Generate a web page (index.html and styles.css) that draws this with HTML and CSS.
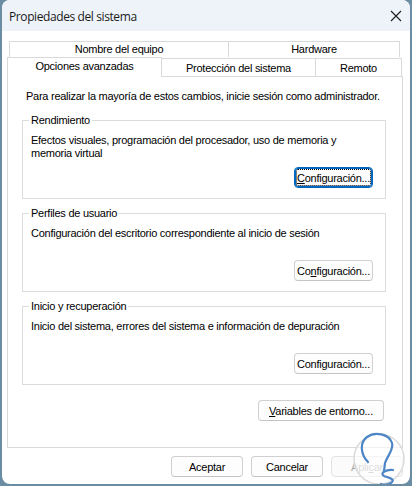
FILE: index.html
```html
<!DOCTYPE html>
<html lang="es">
<head>
<meta charset="utf-8">
<title>Propiedades del sistema</title>
<link rel="stylesheet" href="styles.css">
</head>
<body>
<div class="window">
  <div class="titlebar">
    <span class="title">Propiedades del sistema</span>
    <svg class="close" width="12" height="12" viewBox="0 0 12 12" aria-hidden="true"><path d="M1 1L11 11M11 1L1 11" stroke="#1b1b1b" stroke-width="1.1" fill="none"/></svg>
  </div>
  <div class="content">
    <div class="tabrow back">
      <div class="tab t-nombre">Nombre del equipo</div>
      <div class="tab t-hw">Hardware</div>
    </div>
    <div class="tabrow front">
      <div class="tab t-opc selected">Opciones avanzadas</div>
      <div class="tab t-prot">Protección del sistema</div>
      <div class="tab t-rem">Remoto</div>
    </div>
    <div class="panel">
      <p class="intro">Para realizar la mayoría de estos cambios, inicie sesión como administrador.</p>
      <fieldset class="group">
        <legend>Rendimiento</legend>
        <p class="desc">Efectos visuales, programación del procesador, uso de memoria y memoria virtual</p>
        <div class="actions"><button class="btn cfg focused" type="button"><u>C</u>onfiguración...</button></div>
      </fieldset>
      <fieldset class="group">
        <legend>Perfiles de usuario</legend>
        <p class="desc">Configuración del escritorio correspondiente al inicio de sesión</p>
        <div class="actions"><button class="btn cfg" type="button">Co<u>n</u>figuración...</button></div>
      </fieldset>
      <fieldset class="group">
        <legend>Inicio y recuperación</legend>
        <p class="desc">Inicio del sistema, errores del sistema e información de depuración</p>
        <div class="actions"><button class="btn cfg" type="button">Confi<u>g</u>uración...</button></div>
      </fieldset>
      <div class="actions env"><button class="btn wide" type="button"><u>V</u>ariables de entorno...</button></div>
    </div>
    <div class="footer">
      <button class="btn foot" type="button">Aceptar</button>
      <button class="btn foot" type="button">Cancelar</button>
      <button class="btn foot" type="button" disabled>Apli<u>c</u>ar</button>
    </div>
  </div>
  <svg class="watermark" width="56" height="56" viewBox="0 0 56 56" aria-hidden="true">
    <circle cx="28" cy="28" r="25" fill="rgba(255,255,255,0.6)" stroke="#dadada" stroke-width="1.5"/>
    <path d="M17 31 C10 24, 8 12, 16 6 C24 0, 38 3, 41 12 C43 19, 36 25, 34 32 L33 40 M42 39 C36 38, 28 42, 33 45 C38 47, 45 48, 40 52 C37 54, 32 54, 30 53" fill="none" stroke="#4d86c6" stroke-width="2.2" stroke-linecap="round"/>
  </svg>
</div>
</body>
</html>
```

FILE: styles.css
```css
* { box-sizing: border-box; }
html, body { margin: 0; padding: 0; }
body {
  background: #6a8da4;
  width: 412px;
  height: 486px;
  overflow: hidden;
  font-family: "Liberation Sans", Arial, sans-serif;
  font-size: 11px;
  letter-spacing: -0.26px;
  color: #000;
}
.window {
  position: relative;
  margin: 0 2px;
  width: 408px;
  height: 484px;
  background: #fff;
  border-radius: 8px;
  overflow: hidden;
}
.titlebar {
  height: 31px;
  background: #eef3f9;
  display: flex;
  align-items: center;
  justify-content: space-between;
  padding: 1px 8px 0 7px;
}
.title {
  font-family: "Open Sans", "Noto Sans", sans-serif;
  font-size: 12px;
  letter-spacing: -0.4px;
  color: #1a1a1a;
}
.close { display: block; }
.content {
  padding: 10px 7px 0 5px;
}
.tabrow { display: flex; }
.tabrow.back {
  height: 16px;
  margin: 0 3px 0 2px;
}
.tabrow.front {
  height: 19px;
  align-items: flex-start;
  margin-right: 1px;
}
.tab {
  border-top: 1px solid #d9d9d9;
  text-align: center;
  line-height: 15px;
  white-space: nowrap;
}
.t-nombre { width: 219px; border-left: 1px solid #d9d9d9; }
.t-hw { width: 172px; border-left: 1px solid #d9d9d9; border-right: 1px solid #d9d9d9; }
.t-opc {
  width: 155px;
  height: 20px;
  border-left: 1px solid #d9d9d9;
  border-right: 1px solid #d9d9d9;
  background: #fff;
  position: relative;
  z-index: 1;
  line-height: 16px;
}
.t-prot { width: 154px; height: 18px; margin-top: 1px; border-right: 1px solid #d9d9d9; line-height: 18px; }
.t-rem { width: 86px; height: 18px; margin-top: 1px; border-right: 1px solid #d9d9d9; line-height: 18px; }
.panel {
  height: 372px;
  border: 1px solid #d9d9d9;
  padding: 13px 0 0 18px;
}
.intro {
  margin: 0 0 11px;
  line-height: 13px;
}
.group {
  margin: 0 16px 0 -4px;
  padding: 0 12px 10px 8px;
  border: 1px solid #dcdcdc;
  min-width: 0;
}
.group + .group { margin-top: 8px; }
.group legend {
  padding: 0 2px;
  margin-left: -2px;
  line-height: 13px;
}
.desc {
  margin: 7px 0 0;
  line-height: 13px;
  min-height: 26px;
}
.actions {
  display: flex;
  justify-content: flex-end;
  margin-top: 7px;
}
.actions.env {
  margin: 15px 18px 0 0;
}
.btn {
  font-family: "Liberation Sans", Arial, sans-serif;
  font-size: 11px;
  letter-spacing: -0.26px;
  color: #000;
  background: #fdfdfd;
  border: 1px solid #d0d0d0;
  border-bottom-color: #c4c4c4;
  border-radius: 4px;
  height: 21px;
  padding: 0;
  margin: 0;
  line-height: 18px;
}
.btn u { text-underline-offset: 1px; }
.cfg { width: 79px; }
.wide { width: 126px; }
.focused {
  border: 1px solid #0067c0;
  box-shadow: inset 0 0 0 1px #0067c0;
  outline: 1px dotted #000;
  outline-offset: -3px;
}
.footer {
  display: flex;
  justify-content: flex-end;
  gap: 8px;
  margin-top: 8px;
}
.foot { width: 72px; }
.btn:disabled {
  color: #a6a6a6;
  border-color: #e3e3e3;
  background: #fbfbfb;
}
.watermark {
  position: absolute;
  left: 349px;
  top: 431px;
}
```
